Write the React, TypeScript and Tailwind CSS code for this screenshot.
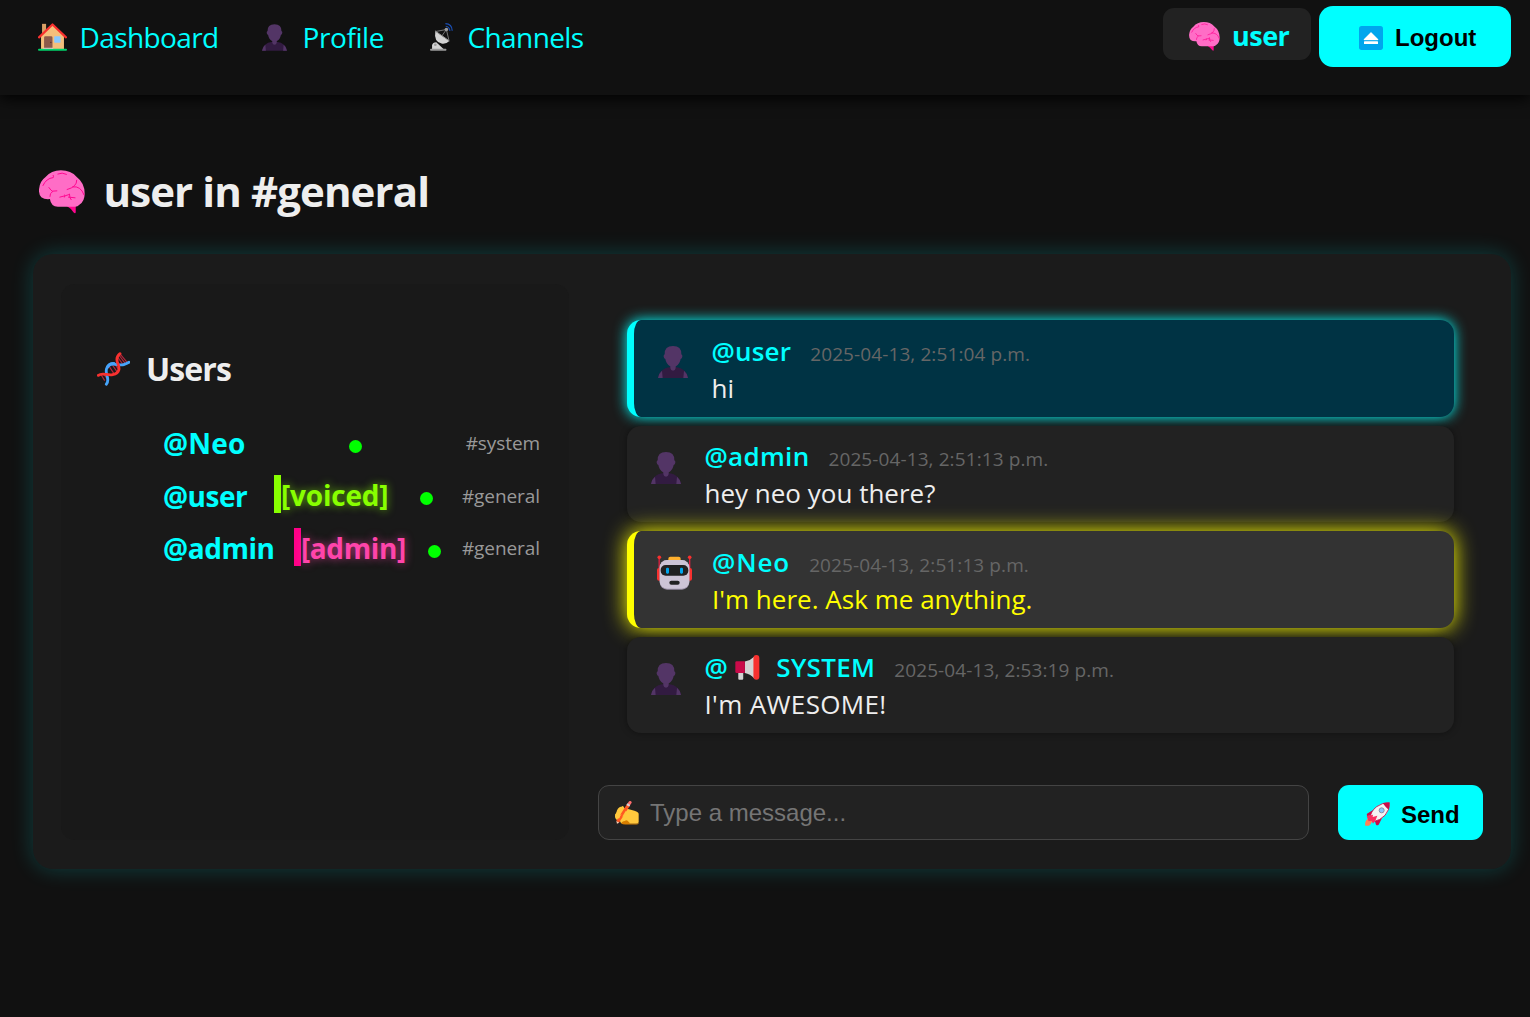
import React from "react";

type IconProps = { className?: string };

const House = ({ className }: IconProps) => (
  <svg viewBox="54 71 86 82" className={className}>
    <path d="M66 73h12v30H66z" fill="#d9a066" />
    <path d="M97 76 63 106v42h68v-42z" fill="#f4bf7c" />
    <path d="M72 147v-33q0-4 4-4h17q4 0 4 4v33z" fill="#8d5a4a" />
    <circle cx="92" cy="128" r="2" fill="#5b3328" />
    <rect x="102" y="110" width="19" height="19" rx="2" fill="#8ac9ff" />
    <path d="M57 113 97 75l40 38" fill="none" stroke="#f8312f" strokeWidth="6.5" strokeLinecap="round" strokeLinejoin="round" />
    <rect x="54" y="147" width="86" height="6" rx="3" fill="#00d26a" />
    <rect x="70" y="144" width="29" height="3" fill="#d3d3d3" />
  </svg>
);

const Person = ({ className }: IconProps) => (
  <svg viewBox="145 137 90 96" className={className}>
    <path d="M145 233q3-20 22-29 10-4 23-4t23 4q19 9 22 29z" fill="#321b41" />
    <path d="M145 233q2-14 12-22l2 22zM235 233q-2-14-12-22l-2 22z" fill="#533566" />
    <path d="M182 194h16v9q-1 8-8 8t-8-8z" fill="#533566" />
    <path d="M165 162q-1-25 25-25t25 25q4 2 3 7t-5 7q-3 16-14 22-9 4-18 0-11-6-14-22-4-2-5-7t3-7z" fill="#533566" />
  </svg>
);

const Dish = ({ className }: IconProps) => (
  <svg viewBox="91 71 70 86" className={className}>
    <path d="M97 152v-13q2-9 13-9l23 22z" fill="#d3d3d3" />
    <circle cx="107" cy="138" r="4" fill="#9b9b9b" />
    <rect x="91" y="150" width="50" height="6" rx="2" fill="#9b9b9b" />
    <path d="M107 96 150 126q-11 11-24 8-24-6-19-38z" fill="#d3d3d3" />
    <path d="m106 95 44 31" stroke="#9b9b9b" strokeWidth="3" />
    <path d="M109 97 141 91 149 125M141 91 127 111" stroke="#8a8a8a" strokeWidth="2.5" fill="none" />
    <circle cx="141" cy="91" r="5.5" fill="#9b9b9b" />
    <path d="M138 73q20 0 21 22M139 81q11 1 13 14" stroke="#1b4fb5" strokeWidth="3.5" fill="none" />
  </svg>
);

const Brain = ({ className }: IconProps) => (
  <svg viewBox="57 61 139 131" className={className}>
    <path d="M140 168q13 7 21 20 7 6 7-2v-20z" fill="#ff0790" />
    <path d="M57 118q2-24 19-36 18-21 47-21 31 0 48 20 24 18 24 50 0 24-16 34-5 6-13 6h-52q-21 0-24-23-16 2-26-6-8-7-7-24z" fill="#ff6dc6" />
    <g fill="none" stroke="#ff0790" strokeWidth="3" strokeLinecap="round">
      <path d="M69 107q10-22 31-24 2-4 0-7M114 72q13-6 26 1M171 91q1 20-29 28M159 111q24-4 34 24M87 113q7 10 10 11l14-1M98 125q-9 5-8 15M120 142q20-5 29-8M134 142q4-7 1-7M149 133q0 13 5 17M146 142l20 2" />
    </g>
  </svg>
);

const Eject = ({ className }: IconProps) => (
  <svg viewBox="627 77 72 72" className={className}>
    <rect x="627" y="77" width="72" height="72" rx="8" fill="#00a6ed" />
    <path d="M663 96 684 117v2h-42v-2z" fill="#fff" stroke="#fff" strokeLinejoin="round" />
    <rect x="642" y="123" width="42" height="8" rx="1" fill="#fff" />
  </svg>
);

const Dna = ({ className }: IconProps) => (
  <svg viewBox="51 67 99 100" className={className} fill="none">
    <path d="M62 132l12 20M70 131l12 16M88 110l16 24M95 102l18 26M103 100l14 20M115 84l14 20M119 78l17 23M122 74l20 24" stroke="#b3263c" strokeWidth="3.5" />
    <path d="M79 163C93 148 71 129 81 113C92 92 116 109 131 104Q140 101 147 97" stroke="#46a4fb" strokeWidth="8.5" strokeLinecap="round" />
    <path d="M55 136C68 126 83 138 98 134C122 128 118 112 114 102C107 87 114 76 120 71" stroke="#f8312f" strokeWidth="8.5" strokeLinecap="round" />
    <path d="M81 114C86 103 95 99 105 101" stroke="#46a4fb" strokeWidth="8.5" />
  </svg>
);

const Robot = ({ className }: IconProps) => (
  <svg viewBox="141 137 105 103" className={className}>
    <path d="M147.500 143v40M239 143v40" stroke="#e02040" strokeWidth="4" />
    <circle cx="148" cy="143" r="5.500" fill="#f8312f" />
    <circle cx="239" cy="143" r="5.500" fill="#f8312f" />
    <rect x="141" y="175" width="14" height="38" rx="6" fill="#f8312f" />
    <rect x="232" y="175" width="14" height="38" rx="6" fill="#f8312f" />
    <rect x="175" y="141" width="37" height="18" rx="6" fill="#ffb02e" />
    <rect x="149" y="151" width="89" height="89" rx="22" fill="#998ea4" />
    <rect x="149" y="151" width="89" height="86" rx="22" fill="#cdc4d6" />
    <rect x="152" y="166" width="83" height="32" rx="15" fill="#212121" />
    <rect x="168" y="174" width="9" height="18" rx="3.500" fill="#00a6ed" />
    <rect x="210" y="174" width="9" height="18" rx="3.500" fill="#00a6ed" />
    <rect x="178" y="213" width="31" height="12" rx="6" fill="#212121" />
  </svg>
);

const Megaphone = ({ className }: IconProps) => (
  <svg viewBox="377 435 74 76" className={className}>
    <rect x="386" y="484" width="15" height="26" rx="3" fill="#d3d3d3" />
    <path d="M406 455q16-3 28-15v66q-12-13-28-16z" fill="#d3d3d3" />
    <path d="M381 454h25v36h-25q-4 0-4-4v-28q0-4 4-4z" fill="#ca0b4a" />
    <rect x="432" y="435" width="18" height="75" rx="9" fill="#f8312f" />
  </svg>
);

const WritingHand = ({ className }: IconProps) => (
  <svg viewBox="75 93 73 72" className={className}>
    <path d="M79 128q3-15 13-18 8 1 12 4l30 8q13 4 13 10v24q0 6-8 6H98q-7-3-8-9-15-2-15-13 0-7 4-12z" fill="#ffc83d" />
    <path d="M94 161q2-8 11-8 6-5 12 3 3 2 3 6h22q5 0 5-5v5q-2 2-7 2h-34q-8 0-12-3z" fill="#d67d00" />
    <path d="m83 156 33-52" stroke="#ff5722" strokeWidth="10" />
    <path d="m116 104 5-7" stroke="#ff6d6d" strokeWidth="9" strokeLinecap="round" />
    <path d="m114 107 3-5" stroke="#d3d3d3" strokeWidth="10" />
    <path d="m79 153 9 6-7 3z" fill="#ffd3b6" />
    <path d="M98 112q-10 10-18 22-2 8 5 8 14-4 22-15" fill="none" stroke="#ffc83d" strokeWidth="8" strokeLinecap="round" />
    <path d="m91 144 21-34" stroke="#ff5722" strokeWidth="6" />
  </svg>
);

const Rocket = ({ className }: IconProps) => (
  <svg viewBox="226 248 75 70" className={className}>
    <path d="M229 303q3-6 10-8l9 9q-4 10-10 14h-11q-2-8 2-15z" fill="#ff8257" />
    <path d="m250 271-18 11q-2 4 1 7l12-2zM279 291l-12 24q-5 4-8 0l-4-13z" fill="#ca0b4a" />
    <path d="M241 297q1-22 20-36 16-12 38-12 2 21-13 38-15 16-36 19z" fill="#f4f4f4" stroke="#ca0b4a" strokeWidth="2.5" />
    <path d="M279 250q10-2 20-1 2 10-2 21-10-8-18-20z" fill="#ca0b4a" />
    <circle cx="276" cy="272" r="7.500" fill="#8ac9ff" stroke="#8b8fa8" strokeWidth="3" />
    <path d="m231 290 19-5-1 7 14-4-5 13-8 11-4-9-9 2z" fill="#f92f60" />
  </svg>
);

const navItems = [
  { label: "Dashboard", icon: <House className="mt-px ml-[38px] h-[28px] w-[29px]" />, text: "ml-[12.500px] w-[139.500px] tracking-[-0.6px]" },
  { label: "Profile", icon: <Person className="mt-px ml-[43px] h-[27px] w-[25px]" />, text: "ml-[15.500px] w-[83.500px] tracking-[-0.4px]" },
  { label: "Channels", icon: <Dish className="mt-px ml-[44px] h-[28px] w-[23px]" />, text: "ml-[14.500px] tracking-[-0.6px]" },
];

const users = [
  { name: "@Neo", tag: null, channel: "#system", style: "w-[83px] tracking-[0.2px]" },
  { name: "@user", tag: "voiced", channel: "#general", style: "w-[82px] tracking-[-0.5px]" },
  { name: "@admin", tag: "admin", channel: "#general", style: "w-[110px] tracking-[-0.45px]" },
];

const messages = [
  { kind: "self", name: "@user", time: "2025-04-13, 2:51:04 p.m.", body: "hi", nameStyle: "tracking-[0.2px]" },
  { kind: "plain", name: "@admin", time: "2025-04-13, 2:51:13 p.m.", body: "hey neo you there?", nameStyle: "tracking-[0.3px]" },
  { kind: "bot", name: "@Neo", time: "2025-04-13, 2:51:13 p.m.", body: "I'm here. Ask me anything.", nameStyle: "tracking-[0.9px]" },
  { kind: "system", name: "@", time: "2025-04-13, 2:53:19 p.m.", body: "I'm AWESOME!", nameStyle: "tracking-[1px]" },
];

const boxStyles: Record<string, string> = {
  self: "border-l-[7px] border-[#00ffff] bg-[#003344] pt-[13px] shadow-[0_0_14px_#00ffff]",
  plain: "bg-[#222] pt-[12px] shadow-[0_0_7px_rgba(0,0,0,0.4)]",
  bot: "border-l-[7px] border-[#ffff00] bg-[#333] pt-[13px] shadow-[0_0_22px_#ffff00]",
  system: "bg-[#222] pt-[12px] shadow-[0_0_7px_rgba(0,0,0,0.4)]",
};

const avatarStyles: Record<string, string> = {
  self: "mt-[13px]",
  plain: "mt-[14px]",
  system: "mt-[14px]",
};

const bodyStyles: Record<string, string> = {
  self: "text-[#eee]",
  plain: "pt-px text-[#eee]",
  bot: "tracking-[0.02px] text-[#ffff00]",
  system: "pt-px tracking-[0.35px] text-[#eee]",
};

export default function App() {
  return (
    <div className="flex h-[1017px] w-[1530px] flex-col overflow-hidden bg-[#111] font-['Open_Sans',sans-serif] whitespace-nowrap text-[#eee]">
      <header className="flex h-[95px] shrink-0 items-start justify-between bg-[#111] pr-[19px] shadow-[0_3px_14px_#000]">
        <nav className="flex h-[73px] items-center text-[28px] leading-[40px] text-[#00ffff]">
          {navItems.map((n) => (
            <a key={n.label} className="flex items-center">
              {n.icon}
              <span className={n.text}>{n.label}</span>
            </a>
          ))}
        </nav>
        <div className="flex gap-2">
          <div className="mt-2 flex h-[52px] w-[148px] items-center rounded-[11px] bg-[#222] pl-[26px]">
            <Brain className="mt-1 h-[29px] w-[31px]" />
            <span className="mt-[3px] ml-[12px] text-[27px] leading-[40px] font-bold tracking-[-0.5px] text-[#00ffff]">user</span>
          </div>
          <button className="mt-[6px] flex h-[61px] w-[192px] items-center rounded-[14px] bg-[#00ffff] pl-[40px] font-['Liberation_Sans',sans-serif] text-[24px] font-bold text-black">
            <Eject className="mt-[2px] h-[24px] w-[24px]" />
            <span className="mt-[2px] ml-[12px]">Logout</span>
          </button>
        </div>
      </header>

      <main className="px-[19px] pt-[67px]">
        <h1 className="flex h-[60px] items-center pl-[20px] text-[42px] leading-[60px] font-bold">
          <Brain className="h-[44px] w-[46px]" />
          <span className="-mt-[2px] ml-[18.500px] tracking-[-0.9px]">user in #general</span>
        </h1>

        <section className="mt-[32px] ml-[14px] flex h-[615px] w-[1478px] rounded-[20px] bg-[#1b1b1b] p-[28px] pt-[30px] pb-[29px] shadow-[0_0_22px_rgba(0,255,255,0.2)]">
          <aside className="h-[556px] w-[508px] rounded-[14px] bg-[#191919] pt-[63px] pr-[29px] pl-[36px]">
            <h2 className="flex h-[44px] items-center text-[32px] leading-[44px] font-bold">
              <Dna className="h-[34px] w-[33px]" />
              <span className="ml-[16px] tracking-[-0.9px]">Users</span>
            </h2>
            <ul className="mt-[26px] flex flex-col pl-[66px]">
              {users.map((u) => (
                <li key={u.name} className="flex h-[52.600px] items-center justify-between">
                  <span className={`${u.style} text-[28px] leading-[38px] font-bold text-[#00ffff]`}>{u.name}</span>
                  {u.tag === "voiced" && (
                    <span className="-mt-[3px] h-[38px] w-[117px] border-l-[7px] border-[#88ff00] text-[28px] leading-[41px] font-bold tracking-[-0.2px] text-[#88ff00] [text-shadow:0_0_9px_#88ff00aa]">[voiced]</span>
                  )}
                  {u.tag === "admin" && (
                    <span className="-mt-[3px] h-[38px] w-[113px] border-l-[7px] border-[#ff0088] text-[28px] leading-[41px] font-bold tracking-[-0.4px] text-[#ff44aa] [text-shadow:0_0_9px_#ff44aaaa]">[admin]</span>
                  )}
                  <i className="mt-[6px] size-[13px] rounded-full bg-[#00ff00]" />
                  <span className="text-[19px] tracking-[-0.08px] text-[#999]">{u.channel}</span>
                </li>
              ))}
            </ul>
          </aside>

          <div className="ml-[29px] flex w-[885px] flex-col">
            <div className="flex h-[501px] flex-col gap-[9px] pt-[36px] pr-[29px] pl-[29px]">
              {messages.map((m, i) => (
                <article key={i} className={`flex h-[96.500px] shrink-0 rounded-[14px] pl-[24px] ${boxStyles[m.kind]}`}>
                  {m.kind === "bot" ? (
                    <Robot className="mt-[11px] mr-[20px] -ml-[1px] h-[35px] w-[35px]" />
                  ) : (
                    <Person className={`mr-[23.500px] h-[32px] w-[30px] ${avatarStyles[m.kind]}`} />
                  )}
                  <div className="text-[26px] leading-[36.700px]">
                    <div className="flex h-[36.700px] items-baseline">
                      <span className={`font-semibold text-[#00ffff] ${m.nameStyle}`}>{m.name}</span>
                      {m.kind === "system" && (
                        <>
                          <Megaphone className="mr-[16px] ml-[6.500px] h-[25px] w-[25px] translate-y-[3px]" />
                          <span className="font-semibold tracking-[0.3px] text-[#00ffff]">SYSTEM</span>
                        </>
                      )}
                      <span className="ml-[19px] text-[19px] tracking-[0.1px] text-[#666]">{m.time}</span>
                    </div>
                    <p className={bodyStyles[m.kind]}>{m.body}</p>
                  </div>
                </article>
              ))}
            </div>
            <form className="flex h-[55px] gap-[29px] font-['Liberation_Sans',sans-serif] text-[24px]">
              <label className="flex w-[711px] items-center rounded-[11px] border border-[#444] bg-[#222] pl-[16px] text-[#757575]">
                <WritingHand className="h-[24px] w-[24px]" />
                <span className="ml-[11px]">Type a message...</span>
              </label>
              <button type="button" className="flex w-[145px] items-center rounded-[11px] bg-[#00ffff] pl-[27px] font-bold text-black">
                <Rocket className="mt-[3px] h-[24px] w-[25px]" />
                <span className="mt-[4px] ml-[11px]">Send</span>
              </button>
            </form>
          </div>
        </section>
      </main>
    </div>
  );
}
